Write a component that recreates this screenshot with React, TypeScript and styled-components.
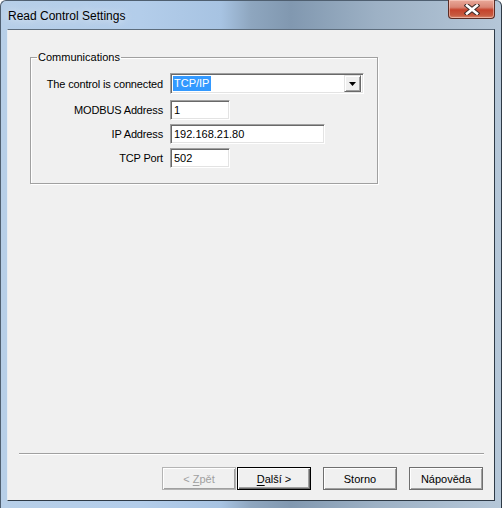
import React from 'react'
import styled, { createGlobalStyle } from 'styled-components';

const GlobalStyle = createGlobalStyle`
    html, body {
        margin: 0;
        padding: 0;
        width: 502px;
        height: 508px;
        overflow: hidden;
    }
    * {
        box-sizing: border-box;
    }
`;

const App = () => {
  return (
    <>
      <GlobalStyle />
      <WindowFrame>
        <TitleBar>
          <TitleText>Read Control Settings</TitleText>
          <CloseButton>
            <svg width="16" height="11" viewBox="0 0 16 11">
              <path d="M3 1.5 L13 9.5 M13 1.5 L3 9.5" stroke="#3b2a28" strokeWidth="4.6" strokeLinecap="square" />
              <path d="M3 1.5 L13 9.5 M13 1.5 L3 9.5" stroke="#fff" strokeWidth="2.6" strokeLinecap="square" />
            </svg>
          </CloseButton>
        </TitleBar>
        <ClientArea>
          <GroupBox>
            <Legend>Communications</Legend>
            <FormGrid>
              <FieldLabel>The control is connected</FieldLabel>
              <ComboBox>
                <SelectedText>TCP/IP</SelectedText>
                <DropButton>
                  <svg width="7" height="4" viewBox="0 0 7 4">
                    <path d="M0 0 H7 L3.5 4 Z" fill="#000" />
                  </svg>
                </DropButton>
              </ComboBox>
              <FieldLabel>MODBUS Address</FieldLabel>
              <EditBox $width={60}>1</EditBox>
              <FieldLabel>IP Address</FieldLabel>
              <EditBox $width={155}>192.168.21.80</EditBox>
              <FieldLabel>TCP Port</FieldLabel>
              <EditBox $width={60}>502</EditBox>
            </FormGrid>
          </GroupBox>
          <Spacer />
          <Separator />
          <ButtonRow>
            <WizardPair>
              <PushButton $disabled><span>&lt; <u>Z</u>pět</span></PushButton>
              <PushButton $default><span><u>D</u>alší &gt;</span></PushButton>
            </WizardPair>
            <PushButton><span>Storno</span></PushButton>
            <PushButton><span>Nápověda</span></PushButton>
          </ButtonRow>
        </ClientArea>
      </WindowFrame>
    </>
  )
};

const WindowFrame = styled.div`
    width: 502px;
    height: 508px;
    display: flex;
    flex-direction: column;
    background: linear-gradient(90deg, #b7cfe8 0%, #b3cdea 28%, #a7c3e2 44%, #8ea6bf 50%, #8198b0 58%, #9db1c5 75%, #b5c7d8 100%);
    border-radius: 6px 6px 0 0;
    border-left: 1px solid #4f5f70;
    border-top: 1px solid #4f5f70;
    border-right: 1px solid #2e3a46;
`;

const TitleBar = styled.div`
    height: 28px;
    display: flex;
    justify-content: space-between;
    align-items: flex-start;
    padding-left: 7px;
`;

const TitleText = styled.div`
    font-family: "Liberation Sans", Arial, sans-serif;
    font-size: 12px;
    color: #000;
    padding-top: 8px;
    text-shadow: 0 0 8px rgba(255, 255, 255, 0.9);
`;

const CloseButton = styled.div`
    width: 47px;
    height: 19px;
    margin-top: -1px;
    margin-right: 6px;
    border: 1px solid #5b2c24;
    border-top: none;
    border-radius: 0 0 4px 4px;
    background: linear-gradient(180deg, #e9a99a 0%, #d98675 40%, #c5432c 55%, #c75a3f 85%, #d8896f 100%);
    box-shadow: inset 0 0 0 1px rgba(255, 220, 210, 0.5);
    display: flex;
    justify-content: center;
    align-items: center;
`;

const ClientArea = styled.div`
    flex: 1;
    margin: 0 6px 7px 6px;
    background-color: #f0f0f0;
    border-top: 1px solid #5d6d7d;
    border-right: 1px solid #2e3a46;
    border-bottom: 1px solid #2e3a46;
    border-left: 1px solid #e6edf4;
    display: flex;
    flex-direction: column;
    font-family: "Liberation Sans", Arial, sans-serif;
    font-size: 11px;
    color: #000;
`;

const GroupBox = styled.fieldset`
    margin: 21px 0 0 22px;
    width: 348px;
    padding: 9px 0 15px 0;
    border: 1px solid #a0a0a0;
    box-shadow: inset 1px 1px 0 #fff, 1px 1px 0 #fff;
`;

const Legend = styled.legend`
    margin-left: 6px;
    padding: 0 1px;
    font-size: 11px;
    line-height: 13px;
`;

const FormGrid = styled.div`
    display: grid;
    grid-template-columns: 132px auto;
    column-gap: 7px;
    row-gap: 4px;
    justify-items: start;
    align-items: center;
`;

const FieldLabel = styled.div`
    justify-self: end;
    white-space: nowrap;
    line-height: 13px;
    letter-spacing: -0.15px;
`;

const sunken = `
    border-style: solid;
    border-width: 1px;
    border-color: #a0a0a0 #fff #fff #a0a0a0;
    box-shadow: inset 1px 1px 0 #696969, inset -1px -1px 0 #e3e3e3;
    background-color: #fff;
`;

const ComboBox = styled.div`
    ${sunken}
    width: 194px;
    height: 21px;
    margin-bottom: 2px;
    display: flex;
    align-items: center;
    justify-content: space-between;
    padding: 0 2px 0 2px;
`;

const SelectedText = styled.span`
    background-color: #3399ff;
    color: #fff;
    line-height: 15px;
    padding: 0 2px 0 1px;
    width: 38px;
`;

const DropButton = styled.div`
    width: 17px;
    height: 17px;
    background-color: #f0f0f0;
    border: 1px solid;
    border-color: #e3e3e3 #696969 #696969 #e3e3e3;
    box-shadow: inset 1px 1px 0 #fff, inset -1px -1px 0 #a0a0a0;
    display: flex;
    justify-content: center;
    align-items: center;
`;

const EditBox = styled.div<{ $width: number }>`
    ${sunken}
    width: ${p => p.$width}px;
    height: 20px;
    padding: 2px 0 0 3px;
    line-height: 14px;
`;

const Spacer = styled.div`
    flex: 1;
`;

const Separator = styled.div`
    margin: 0 10px 0 11px;
    height: 2px;
    border-top: 1px solid #a0a0a0;
    border-bottom: 1px solid #fff;
`;

const ButtonRow = styled.div`
    display: flex;
    justify-content: flex-end;
    gap: 12px;
    padding: 12px 11px 10px 0;
`;

const WizardPair = styled.div`
    display: flex;
    gap: 1px;
`;

const PushButton = styled.div<{ $disabled?: boolean; $default?: boolean }>`
    width: 74px;
    height: 23px;
    display: flex;
    justify-content: center;
    align-items: center;
    white-space: pre;
    background-color: #f0f0f0;
    color: ${p => (p.$disabled ? '#a0a0a0' : '#000')};
    border: 1px solid ${p => (p.$default ? '#000' : p.$disabled ? '#b4b4b4' : '#6f6f6f')};
    box-shadow: ${p =>
      p.$default
        ? 'inset 1px 1px 0 #fff, inset -1px -1px 0 #696969, inset -2px -2px 0 #a0a0a0'
        : 'inset 1px 1px 0 #fff, inset -1px -1px 0 #a0a0a0'};
    cursor: default;

    u {
        text-decoration-thickness: 1px;
        text-underline-offset: 2px;
    }
`;

export default App;
